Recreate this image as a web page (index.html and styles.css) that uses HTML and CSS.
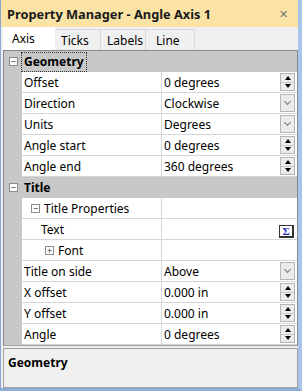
FILE: index.html
```html
<!DOCTYPE html>
<html lang="en">
<head>
  <meta charset="UTF-8">
  <title>Property Manager - Angle Axis 1</title>
  <link rel="stylesheet" href="styles.css">
</head>
<body>

  <div class="window">
    <div class="titlebar">
      <span class="title">Property Manager - Angle Axis 1</span>
      <span class="close">&#x2715;</span>
    </div>

    <div class="tabs">
      <div class="tab active">Axis</div>
      <div class="tab">Ticks</div>
      <div class="tab">Labels</div>
      <div class="tab">Line</div>
    </div>

    <div class="grid">
      <!-- Geometry -->
      <div class="row category">
        <div class="margin"><span class="toggle">&minus;</span></div>
        <div class="cat-name"><span class="focus">Geometry</span></div>
      </div>
      <div class="row">
        <div class="margin"></div>
        <div class="name">Offset</div>
        <div class="value">0 degrees<span class="spin"><i class="up"></i><i class="down"></i></span></div>
      </div>
      <div class="row">
        <div class="margin"></div>
        <div class="name">Direction</div>
        <div class="value">Clockwise<span class="drop"></span></div>
      </div>
      <div class="row">
        <div class="margin"></div>
        <div class="name">Units</div>
        <div class="value">Degrees<span class="drop"></span></div>
      </div>
      <div class="row">
        <div class="margin"></div>
        <div class="name">Angle start</div>
        <div class="value">0 degrees<span class="spin"><i class="up"></i><i class="down"></i></span></div>
      </div>
      <div class="row">
        <div class="margin"></div>
        <div class="name">Angle end</div>
        <div class="value">360 degrees<span class="spin"><i class="up"></i><i class="down"></i></span></div>
      </div>

      <!-- Title -->
      <div class="row category">
        <div class="margin"><span class="toggle">&minus;</span></div>
        <div class="cat-name">Title</div>
      </div>
      <div class="row">
        <div class="margin"></div>
        <div class="name sub"><span class="toggle">&minus;</span>Title Properties</div>
        <div class="value"></div>
      </div>
      <div class="row">
        <div class="margin"></div>
        <div class="name sub2">Text</div>
        <div class="value"><span class="sigma">&Sigma;</span></div>
      </div>
      <div class="row">
        <div class="margin"></div>
        <div class="name sub3"><span class="toggle">+</span>Font</div>
        <div class="value"></div>
      </div>
      <div class="row">
        <div class="margin"></div>
        <div class="name">Title on side</div>
        <div class="value">Above<span class="drop"></span></div>
      </div>
      <div class="row">
        <div class="margin"></div>
        <div class="name">X offset</div>
        <div class="value">0.000 in<span class="spin"><i class="up"></i><i class="down"></i></span></div>
      </div>
      <div class="row">
        <div class="margin"></div>
        <div class="name">Y offset</div>
        <div class="value">0.000 in<span class="spin"><i class="up"></i><i class="down"></i></span></div>
      </div>
      <div class="row">
        <div class="margin"></div>
        <div class="name">Angle</div>
        <div class="value">0 degrees<span class="spin"><i class="up"></i><i class="down"></i></span></div>
      </div>
    </div>

    <div class="desc">
      <b>Geometry</b>
    </div>
  </div>

</body>
</html>
```

FILE: styles.css
```css
* {
  margin: 0;
  padding: 0;
  box-sizing: border-box;
}

body {
  font-family: "Noto Sans", "Open Sans", Arial, sans-serif;
  font-size: 12px;
  color: #000;
  background-color: #fff;
}

.window {
  width: 302px;
  height: 391px;
  background-color: #f0f0f0;
  border-left: 1px solid #8aa6cf;
  border-right: 4px solid #a8c4ea;
  border-bottom: 3px solid #8fadd6;
  display: flex;
  flex-direction: column;
}

.titlebar {
  height: 27px;
  flex-shrink: 0;
  background-color: #fbe3a6;
  display: flex;
  align-items: center;
  justify-content: space-between;
  padding: 0 10px 0 6px;
}

.title {
  font-weight: bold;
  font-size: 12.8px;
  color: #1a1a1a;
}

.close {
  color: #777;
  font-size: 11px;
}

.tabs {
  height: 23px;
  flex-shrink: 0;
  display: flex;
  align-items: flex-end;
  padding-left: 2px;
}

.tab {
  height: 21px;
  border: 1px solid #d9d9d9;
  border-bottom: none;
  border-left: none;
  background-color: #f0f0f0;
  display: flex;
  align-items: center;
  white-space: nowrap;
}

.tab:nth-child(2) { width: 46px; padding-left: 6px; }
.tab:nth-child(3) { width: 45px; padding-left: 6px; }
.tab:nth-child(4) { width: 49px; padding-left: 10px; }

.tab.active {
  width: 52px;
  height: 23px;
  background-color: #fff;
  border: none;
  padding-left: 9px;
}

.grid {
  margin: 0 0 0 2px;
  border: 1px solid #828790;
  border-bottom-color: #a0a0a0;
  height: 296px;
  flex-shrink: 0;
  background-color: #fff;
}

.row {
  display: grid;
  grid-template-columns: 18px 140px 1fr;
  height: 21px;
}

.margin {
  background-color: #c8c8c8;
  display: flex;
  align-items: center;
  justify-content: center;
}

.name, .value {
  border-bottom: 1px solid #d6d6d6;
  display: flex;
  align-items: center;
  padding-left: 2px;
  white-space: nowrap;
}

.name {
  border-right: 1px solid #d6d6d6;
}

.value {
  position: relative;
  padding-left: 2px;
}

.category {
  background-color: #c8c8c8;
}

.category .cat-name {
  grid-column: 2 / 4;
  font-weight: bold;
  display: flex;
  align-items: center;
  padding-left: 2px;
}

.focus {
  border: 1px dotted #333;
  height: 20px;
  margin-left: -3px;
  padding: 0 2px;
  display: flex;
  align-items: center;
}

.toggle {
  width: 9px;
  height: 9px;
  border: 1px solid #8c8c8c;
  background-color: #fff;
  color: #333;
  font-size: 9px;
  line-height: 7px;
  text-align: center;
  display: inline-block;
  font-weight: normal;
}

.name .toggle {
  margin-right: 4px;
}

.name.sub {
  padding-left: 9px;
}

.name.sub2 {
  padding-left: 19px;
}

.name.sub3 {
  padding-left: 23px;
}

.spin, .drop {
  position: absolute;
  right: 2px;
  top: 1px;
  width: 15px;
  height: 18px;
  border: 1px solid #b5b5b5;
  background-color: #ececec;
}

.spin {
  display: flex;
  flex-direction: column;
}

.spin i {
  flex: 1;
  display: flex;
  align-items: center;
  justify-content: center;
}

.spin i::after {
  content: "";
  border-left: 3px solid transparent;
  border-right: 3px solid transparent;
}

.spin .up::after {
  border-bottom: 4px solid #000;
}

.spin .down::after {
  border-top: 4px solid #000;
}

.spin .up {
  border-bottom: 1px solid #c8c8c8;
}

.drop::after {
  content: "";
  position: absolute;
  left: 4px;
  top: 4px;
  width: 4px;
  height: 4px;
  border-right: 1px solid #777;
  border-bottom: 1px solid #777;
  transform: rotate(45deg);
}

.sigma {
  position: absolute;
  right: 3px;
  top: 6px;
  width: 15px;
  height: 13px;
  border: 1px solid #333;
  border-right-width: 2px;
  border-bottom-width: 2px;
  background-color: #fff;
  color: #1c2bb3;
  font-family: "Liberation Serif", serif;
  font-weight: bold;
  font-size: 11px;
  line-height: 10px;
  text-align: center;
}

.desc {
  margin: 2px 0 0 2px;
  border: 1px solid #a0a0a0;
  flex: 1;
  padding: 5px 4px;
}

.desc b {
  font-size: 12px;
}
```
